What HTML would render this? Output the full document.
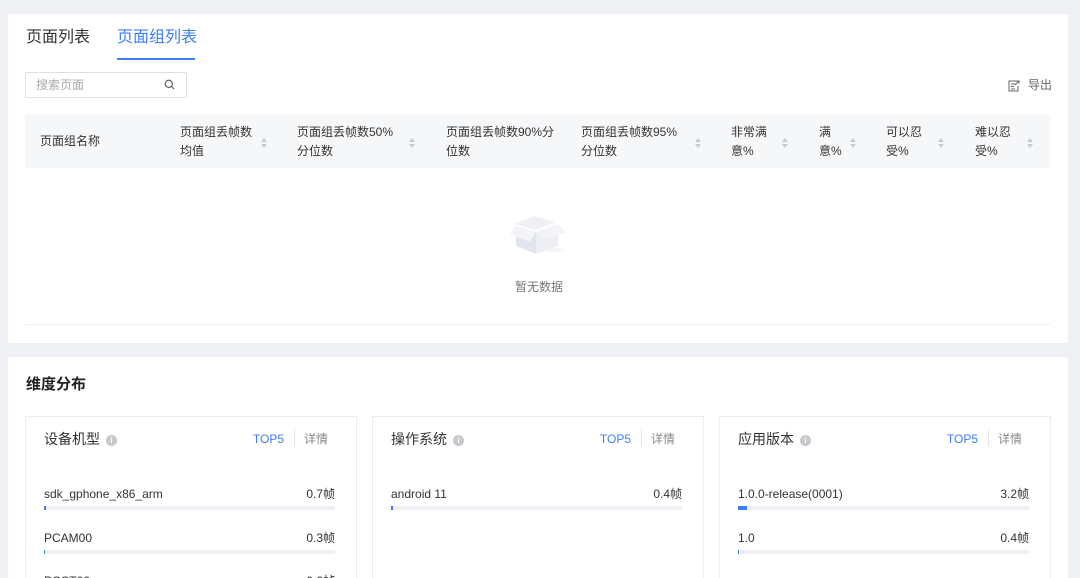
<!DOCTYPE html>
<html><head><meta charset="utf-8"><style>
*{margin:0;padding:0;box-sizing:border-box}
html,body{width:1080px;height:578px;overflow:hidden}
body{background:#eef0f4;font-family:"Liberation Sans","Noto Sans CJK SC",sans-serif;position:relative;color:#333}
.abs{position:absolute}
.card{position:absolute;background:#fff}
.th{position:absolute;font-size:12px;color:#333;line-height:19px}
.sort{position:absolute;width:7px;height:11px}
.sort:before{content:"";position:absolute;left:0;top:0;border-left:3.5px solid transparent;border-right:3.5px solid transparent;border-bottom:4px solid #c8cbd0}
.sort:after{content:"";position:absolute;left:0;top:6px;border-left:3.5px solid transparent;border-right:3.5px solid transparent;border-top:4px solid #c8cbd0}
.sub{position:absolute;top:416px;width:332px;height:170px;border:1px solid #ebedf0;background:#fff}
.sub .t{position:absolute;left:18px;top:12px;font-size:14px;color:#333;line-height:20px}
.info{display:inline-block;width:11px;height:11px;border-radius:50%;background:#c5c8cc;color:#fff;font-size:8px;text-align:center;line-height:11px;vertical-align:1px;margin-left:6px;font-weight:bold}
.top5{position:absolute;top:14px;right:72px;font-size:12px;color:#3d7ef5;line-height:16px}
.sep{position:absolute;top:12px;right:61px;width:1px;height:17px;background:#e3e5e8}
.det{position:absolute;top:14px;right:28px;font-size:12px;color:#888;line-height:16px}
.row{position:absolute;left:18px;width:291px;font-size:12px;color:#333;line-height:16px;height:16px}
.row .v{position:absolute;right:0;top:0;line-height:16px}
.bar{position:absolute;left:0;top:20px;width:291px;height:4px;background:#eef0f3}
.bar i{position:absolute;left:0;top:0;height:4px;background:#3d7ef5}
</style></head><body>
<div class="card" style="left:8px;top:14px;width:1060px;height:329px"></div>
<div class="abs" style="left:26px;top:28px;font-size:16px;color:#333;line-height:20px">页面列表</div>
<div class="abs" style="left:117px;top:28px;font-size:16px;color:#3d7ef5;line-height:20px">页面组列表</div>
<div class="abs" style="left:117px;top:58px;width:78px;height:2px;background:#3d7ef5"></div>
<div class="abs" style="left:25px;top:72px;width:162px;height:26px;border:1px solid #dcdfe3;border-radius:2px"></div>
<div class="abs" style="left:36px;top:77px;font-size:12px;color:#aaa;line-height:16px">搜索页面</div>
<svg class="abs" style="left:164px;top:79px" width="11" height="11" viewBox="0 0 11 11"><circle cx="4.8" cy="4.8" r="3.6" fill="none" stroke="#555" stroke-width="1.1"/><path d="M7.5 7.5L10 10" stroke="#555" stroke-width="1.1"/></svg>
<svg class="abs" style="left:1008px;top:80px" width="12" height="12" viewBox="0 0 12 12"><path d="M9 1H1v10h9V6" fill="none" stroke="#666" stroke-width="1"/><path d="M3 4h4M3 6.5h3M3 9h4M7 5l4-4M8.5 1H11v2.5" fill="none" stroke="#666" stroke-width="1"/></svg>
<div class="abs" style="left:1028px;top:77px;font-size:12px;color:#666;line-height:16px">导出</div>
<div class="abs" style="left:25px;top:115px;width:1025px;height:53px;background:#f6f7f9"></div>
<div class="th" style="left:40px;top:132px">页面组名称</div>
<div class="th" style="left:180px;top:123px">页面组丢帧数<br>均值</div><div class="sort" style="left:261px;top:138px"></div>
<div class="th" style="left:297px;top:123px">页面组丢帧数50%<br>分位数</div><div class="sort" style="left:409px;top:138px"></div>
<div class="th" style="left:446px;top:123px">页面组丢帧数90%分<br>位数</div>
<div class="th" style="left:581px;top:123px">页面组丢帧数95%<br>分位数</div><div class="sort" style="left:695px;top:138px"></div>
<div class="th" style="left:731px;top:123px">非常满<br>意%</div><div class="sort" style="left:782px;top:138px"></div>
<div class="th" style="left:819px;top:123px">满<br>意%</div><div class="sort" style="left:850px;top:138px"></div>
<div class="th" style="left:886px;top:123px">可以忍<br>受%</div><div class="sort" style="left:938px;top:138px"></div>
<div class="th" style="left:975px;top:123px">难以忍<br>受%</div><div class="sort" style="left:1027px;top:138px"></div>
<svg class="abs" style="left:510px;top:212px" width="58" height="44" viewBox="0 0 58 44"><path d="M4 12L24 4L46 10L26 18Z" fill="#eef0f6"/><path d="M6 14L26 20V42L6 34Z" fill="#e1e4ec"/><path d="M26 20L48 12V34L26 42Z" fill="#eceef4"/><path d="M48 12L56 20L36 28L26 20Z" fill="#f3f4f8"/><path d="M6 14L0 22L20 30L26 20Z" fill="#f3f4f8"/><ellipse cx="44" cy="38" rx="10" ry="2" fill="#f3f4f6"/></svg>
<div class="abs" style="left:515px;top:279px;font-size:12px;color:#777;line-height:16px">暂无数据</div>
<div class="abs" style="left:25px;top:324px;width:1025px;height:1px;background:#eceef1"></div>

<div class="card" style="left:8px;top:357px;width:1060px;height:230px"></div>
<div class="abs" style="left:26px;top:375px;font-size:15px;color:#222;font-weight:bold;line-height:20px">维度分布</div>

<div class="sub" style="left:25px">
<div class="t">设备机型<span class="info">i</span></div><div class="top5">TOP5</div><div class="sep"></div><div class="det">详情</div>
<div class="row" style="top:69px">sdk_gphone_x86_arm<span class="v">0.7帧</span><div class="bar"><i style="width:2px"></i></div></div>
<div class="row" style="top:113px">PCAM00<span class="v">0.3帧</span><div class="bar"><i style="width:1px"></i></div></div>
<div class="row" style="top:156px">PCCT00<span class="v">0.2帧</span></div>
</div>
<div class="sub" style="left:372px">
<div class="t">操作系统<span class="info">i</span></div><div class="top5">TOP5</div><div class="sep"></div><div class="det">详情</div>
<div class="row" style="top:69px">android 11<span class="v">0.4帧</span><div class="bar"><i style="width:2px"></i></div></div>
</div>
<div class="sub" style="left:719px">
<div class="t">应用版本<span class="info">i</span></div><div class="top5">TOP5</div><div class="sep"></div><div class="det">详情</div>
<div class="row" style="top:69px">1.0.0-release(0001)<span class="v">3.2帧</span><div class="bar"><i style="width:9px"></i></div></div>
<div class="row" style="top:113px">1.0<span class="v">0.4帧</span><div class="bar"><i style="width:1px"></i></div></div>
</div>
</body></html>
